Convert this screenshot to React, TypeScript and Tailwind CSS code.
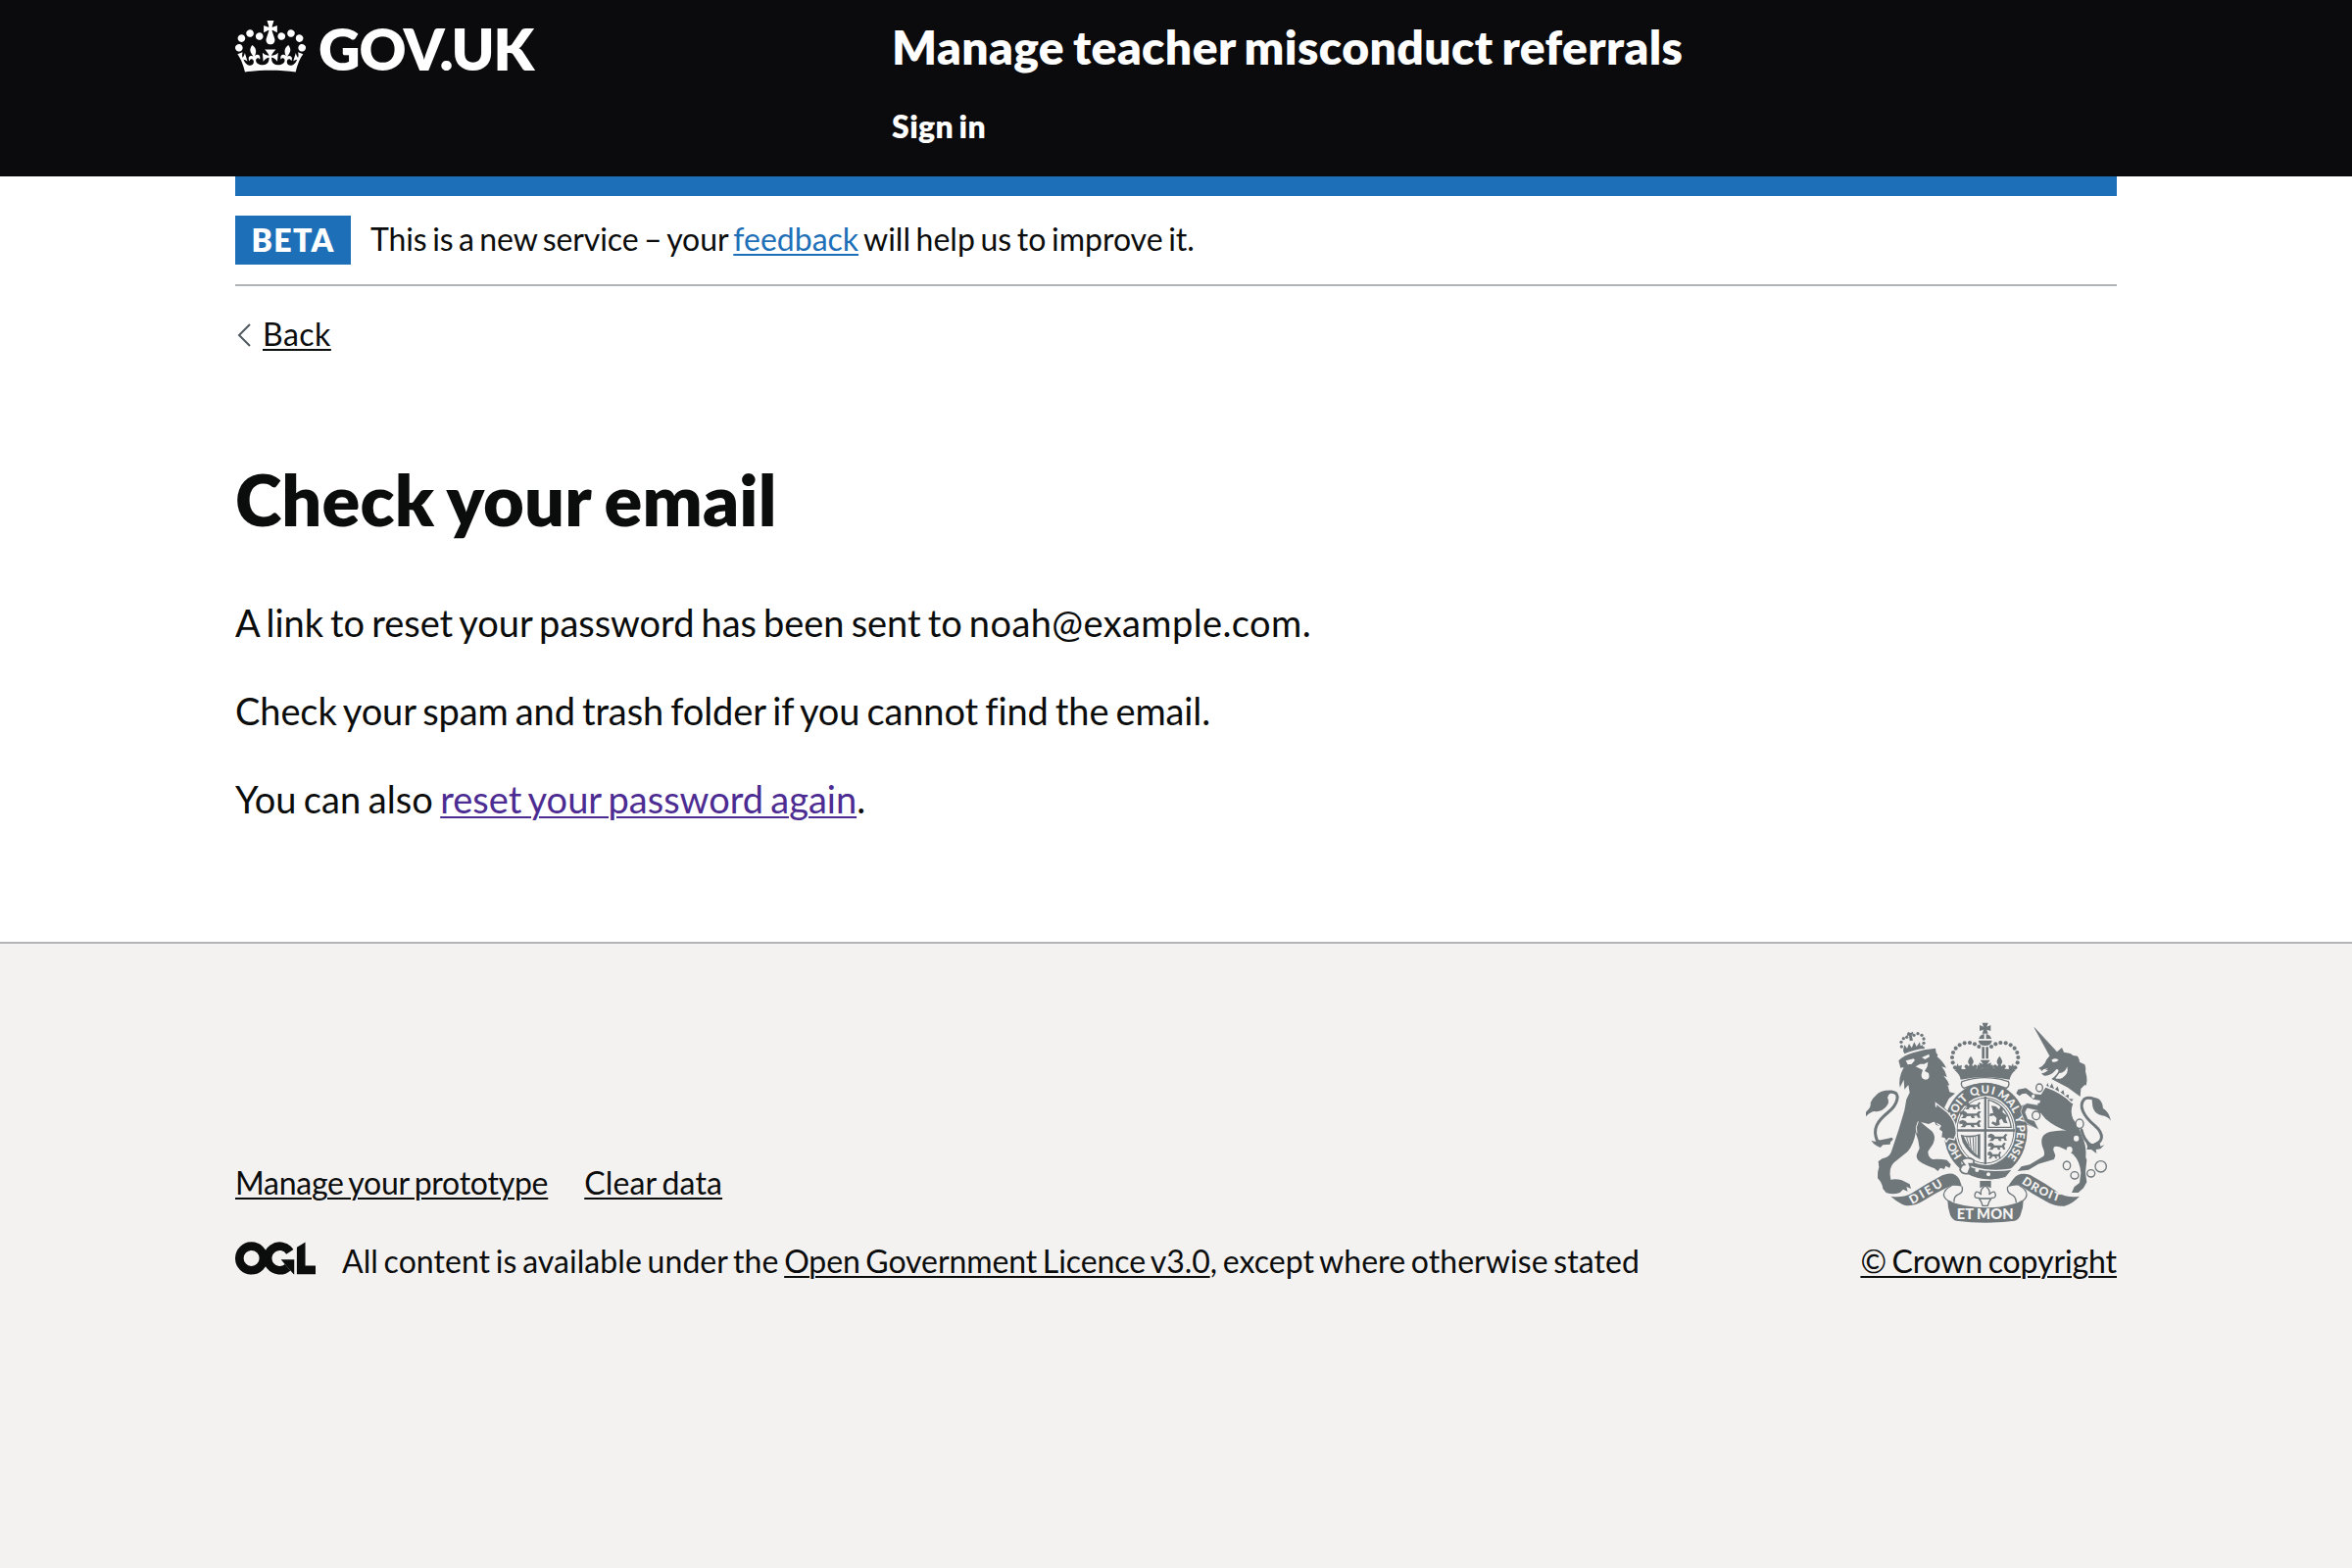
import React from "react";

const INK = "#6f777b";
const PAPER = "#f3f2f1";

function Crown() {
  return (
    <svg viewBox="0 0 132 97" className="block h-[53px] w-[72px] shrink-0" fill="currentColor" aria-hidden="true">
      <path d="M25 30.2c3.5 1.5 7.7-.2 9.1-3.7 1.5-3.6-.2-7.8-3.9-9.2-3.6-1.4-7.6.3-9.1 3.9-1.4 3.5.3 7.5 3.9 9zM9 39.5c3.6 1.5 7.8-.2 9.2-3.7 1.5-3.6-.2-7.8-3.9-9.1-3.6-1.5-7.6.2-9.1 3.8-1.4 3.5.3 7.5 3.8 9zM4.4 57.2c3.5 1.5 7.7-.2 9.1-3.8 1.5-3.6-.2-7.7-3.9-9.1-3.5-1.5-7.6.3-9.1 3.8-1.4 3.5.3 7.6 3.9 9.1zm38.3-21.4c3.5 1.5 7.7-.2 9.1-3.8 1.5-3.6-.2-7.7-3.9-9.1-3.6-1.5-7.6.3-9.1 3.8-1.3 3.6.4 7.7 3.9 9.1zm64.4-5.6c-3.6 1.5-7.8-.2-9.1-3.7-1.5-3.6.2-7.8 3.8-9.2 3.6-1.4 7.7.3 9.2 3.9 1.3 3.5-.4 7.5-3.9 9zm15.9 9.3c-3.6 1.5-7.7-.2-9.1-3.7-1.5-3.6.2-7.8 3.7-9.1 3.6-1.5 7.7.2 9.2 3.8 1.5 3.5-.3 7.5-3.8 9zm4.7 17.7c-3.6 1.5-7.8-.2-9.2-3.8-1.5-3.6.2-7.7 3.9-9.1 3.6-1.5 7.7.3 9.2 3.8 1.3 3.5-.4 7.6-3.9 9.1zM89.3 35.8c-3.6 1.5-7.8-.2-9.2-3.8-1.4-3.6.2-7.7 3.9-9.1 3.6-1.5 7.7.3 9.2 3.8 1.4 3.6-.3 7.7-3.9 9.1zM69.7 17.7l8.9 4.7V9.3l-8.9 2.8c-.2-.3-.5-.6-.9-.9L72.4 0H59.6l3.5 11.2c-.3.3-.6.5-.9.9l-8.8-2.8v13.1l8.8-4.7c.3.3.6.7.9.9l-5 15.4v.1c-.2.8-.4 1.6-.4 2.4 0 4.1 3.1 7.5 7 8.1h.2c.3 0 .7.1 1 .1.4 0 .7 0 1-.1h.2c4-.6 7.1-4.1 7.1-8.1 0-.8-.1-1.7-.4-2.4V34l-5.1-15.4c.4-.2.7-.6 1-.9zM66 92.8c16.9 0 32.8 1.1 47.1 3.2 4-16.9 8.9-26.7 14-33.5l-9.6-3.4c1 4.9 1.1 7.2 0 10.2-1.5-1.4-3-4.3-4.2-8.7L108.6 76c2.8-2 5-3.2 7.5-3.3-4.4 9.4-10 11.9-13.6 11.2-4.3-.8-6.3-4.6-5.6-7.9 1-4.7 5.7-5.9 8-.5 4.3-8.7-3-11.4-7.6-8.8 7.1-7.2 7.9-13.5 2.1-21.1-8 6.1-8.1 12.3-4.5 20.8-4.7-5.4-12.1-2.5-9.5 6.2 3.4-5.2 7.9-2 7.2 3.1-.6 4.3-6.4 7.8-13.5 7.2-10.3-.9-10.9-8-11.2-13.8 2.5-.5 7.1 1.8 11 7.3L80.2 60c-4.1 4.4-8 5.3-12.3 5.4 1.4-4.4 8-11.6 8-11.6H55.5s6.4 7.2 7.9 11.6c-4.2-.1-8-1-12.3-5.4l1.4 16.4c3.9-5.5 8.5-7.7 10.9-7.3-.3 5.8-.9 12.8-11.1 13.8-7.2.6-12.9-2.9-13.5-7.2-.7-5 3.8-8.3 7.1-3.1 2.7-8.7-4.6-11.6-9.4-6.2 3.7-8.5 3.6-14.7-4.6-20.8-5.8 7.6-5 13.9 2.2 21.1-4.7-2.6-11.9.1-7.7 8.8 2.3-5.5 7.1-4.2 8.1.5.7 3.3-1.3 7.1-5.7 7.9-3.5.7-9-1.8-13.5-11.2 2.5.1 4.7 1.3 7.5 3.3l-4.7-15.4c-1.2 4.4-2.7 7.2-4.3 8.7-1.1-3-.9-5.3 0-10.2l-9.5 3.4c5 6.9 9.9 16.7 14 33.5 14.8-2.1 30.8-3.2 47.7-3.2z" />
    </svg>
  );
}

function OglLogo() {
  return (
    <svg viewBox="0 0 483.2 196" className="block h-[34px] w-[82px] shrink-0" role="img" aria-label="Open Government Licence">
      <g fill="none" stroke="#0b0c0c" strokeWidth="50.7">
        <circle cx="97.8" cy="97.8" r="72.5" />
        <path d="M329 59A72.5 72.5 0 1 0 316 152" />
      </g>
      <path d="M274.900 105.700h80v87.800h-3l-53-60.300zM370.800 32.400 421.500.1v142.700h61.700v50.700H370.800z" fill="#0b0c0c" />
    </svg>
  );
}

/* Dots of the left-hand arch of the royal crown; mirrored for the right. */
const archDots = [
  [345, 209], [338, 194], [336, 178], [339, 163], [347, 150], [359, 140], [374, 134], [390, 133], [405, 137], [418, 145],
];

function Arch() {
  return (
    <g>
      {archDots.map(([x, y]) => (
        <circle key={`${x}-${y}`} cx={x} cy={y} r="6.200" />
      ))}
      <path d="M393 174q14 16 4 26 2 4 2 6 8-12 14 0-4 10-12 12h-16q-8-2-12-12 6-12 14 0 0-2 2-6-10-10 4-26z" />
      <path d="M352 196l4 8 10-2-2 10 8 8h-26zM414 200l8 4v14h-12z" />
    </g>
  );
}

function LionPassant() {
  return (
    <path d="M0 4l8-4 7 4 3 5h22l6-8 6 2-5 7 3 12h-6l-3-7-7 1 2 7h-7l-3-7-9 1-4 6H2l6-6-1-5-7 1z" />
  );
}

const mottoWords = [
  { word: "HO", at: 4, length: 50 },
  { word: "SOIT", at: 120, length: 78 },
  { word: "QUI", at: 210, length: 70 },
  { word: "MAL", at: 290, length: 76 },
  { word: "Y", at: 376, length: 20 },
  { word: "PENSE", at: 402, length: 106 },
];

function CoatOfArms() {
  return (
    <svg viewBox="72 70 750 615" className="block h-[205px] w-[250px]" fill={INK} aria-hidden="true">
      {/* Tails */}
      <g fill="none" stroke={INK} strokeWidth="9" strokeLinecap="round">
        <path d="M150 428Q126 450 106 432C92 396 106 374 140 346C168 324 182 284 150 284" />
        <path d="M732 400Q738 430 762 448C802 440 802 412 772 386C738 358 722 326 740 306Q750 298 772 306" />
      </g>
      <path d="M154 279q-38-2-50 14-14 12-18 24 4 12-14 28l0 14q12-14 26-16 20 4 36-14 12-14 4-28 4-12 16-18z" />
      <path d="M88 432q14 6 22 0l40-8-4 20-22 2-8 8-12-6q-10-6-16-16z" />
      <path d="M764 300q32 0 34 34 18 10 24 38-10-14-28-16-24-6-28-28-2-14-2-28z" />
      <path d="M742 428q8 16 28 14l16-10 4 18 12-4-12 12-14 2 2 12-16-12-14 0 2-10z" />

      {/* Lion */}
      <path d="M172 188Q188 172 216 164 250 152 285 150L287 164 292 170 290 176Q306 188 318 210L304 206Q316 220 320 238L310 234Q324 250 328 264L322 262 328 284 345 288 326 304 312 332 330 350Q346 372 345 410L340 428 326 424 318 434 314 424 304 422 306 406 296 398 302 390 286 384 282 374 264 382 240 376Q256 390 274 404 288 420 278 442L262 466Q262 484 276 490 300 488 320 492L332 506 328 516 316 510 312 520 300 516 292 526 282 518Q252 508 236 496 224 486 228 474L236 456Q234 430 224 408 220 440 200 466L158 500Q140 516 148 552 164 548 182 554L206 566 210 580 196 574 200 588 186 582 176 592Q154 600 134 592L124 580Q122 562 108 548 106 530 112 514L110 496 122 488Q144 484 150 466L172 400 190 340 196 306 206 286 202 262 190 276 188 246 176 270Q170 242 188 208L178 210Z" />
      <path d="M228 410q-6-18 4-36" fill="none" stroke={PAPER} strokeWidth="3" />
      <g fill={PAPER}>
        <path d="M194 188l24-6 4 4-10 12-12 2zM243 178l22-10 2 8-14 8zM224 206l14-8h12l12-6-2 14-8 14 12 6q6 20-10 20-14-2-12-16l4-14z" />
      </g>
      <path d="M186 158q30-14 64-14l2 7q-32 2-62 16z" />
      <g>
        {[[181, 145], [180, 131], [187, 120], [197, 116], [219, 110], [231, 105], [243, 110], [249, 121], [249, 134]].map(([x, y]) => (
          <circle key={`${x}-${y}`} cx={x} cy={y} r="5" />
        ))}
        <path d="M201 100l8 3 7-4 1 8-5 2 4 17-10 1-2-16-7 1 1-6z" />
        <path d="M186 154l4-14 8 10 6-14 8 13 8-18 7 14 10-14 2 12 8-4-3 8q-28 0-56 14z" />
      </g>

      {/* Unicorn */}
      <path d="M588 87l72 78-24 10z" stroke={INK} strokeWidth="2" />
      <path d="M600 211q12-4 20-16 8-22 30-28l22-19 6 14 20 4 8 6 14 2q6 10 6 18l16 8q4 10 2 20l4 18q2 12-2 26l-4-2-12 12-2 24-38-28-50-26q20-14 22-26-6-8-10 0-16 18-34 16l-8-6 6-8 14-8-14 2-6 6-4-6z" />
      <path d="M640 186q12-8 22 0-8 8-18 6zM664 226q18 0 24-20 6 22-14 34-12 6-22 2zM604 224l18-8 8 2-14 8z" fill={PAPER} />
      <path d="M622 270Q666 284 706 320 696 342 706 366 726 392 732 416 748 446 745 484L748 492 744 530 748 560 738 578 722 592H702L710 574 726 562 730 532Q728 496 706 474 680 458 664 452 644 446 646 462L652 478 648 490 600 504 570 522 536 526 548 512 574 506 616 480Q622 472 612 450 602 416 634 406 662 400 686 402 650 390 622 366L600 340 566 332 558 346 566 366 586 372 600 398 586 392 566 384 552 370 542 344 548 326 566 318 602 324 606 310 584 306 562 288 550 290 542 296 532 288 538 276 562 272 586 290 608 292Z" />
      <path d="M620 262q46 12 90 58" fill="none" stroke={PAPER} strokeWidth="5" />
      <path d="M628 250l6 16 8-14 8 22 10-12 6 22 12-10 4 20 14-8-2 16 16 2-8 12q-32-34-80-50z" fill={INK} stroke={PAPER} strokeWidth="4" />
      <g fill="none" stroke={INK} strokeWidth="4">
        <ellipse cx="603" cy="271" rx="10" ry="12" fill={PAPER} />
        <ellipse cx="726" cy="381" rx="12" ry="14" fill={PAPER} />
        <ellipse cx="687" cy="509" rx="11" ry="13" />
        <ellipse cx="711" cy="539" rx="12" ry="11" />
        <ellipse cx="761" cy="533" rx="12" ry="11" />
        <circle cx="791" cy="512" r="17" />
      </g>
      <g fill={PAPER}>
        <ellipse cx="584" cy="297" rx="5" ry="6" />
        <ellipse cx="716" cy="426" rx="8" ry="9" />
        <ellipse cx="695" cy="461" rx="9" ry="10" />
      </g>

      {/* Royal crown */}
      <Arch />
      <g transform="matrix(-1 0 0 1 874 0)">
        <Arch />
      </g>
      <path d="M428 72h18l-4 12 12-5v18l-12-4 4 12h-18l4-12-12 4V79l12 5zM418 121q2-12 16-15v15zM440 106q14 3 16 15h-16z" />
      <path d="M416 126h42q-2 16-21 16t-21-16z" />
      <path d="M427 146h8v36h-8zM439 146h8v36h-8zM422 186h30l-9 13 12-5v18l-12-2 8 10h-28l8-10-12 2v-18l12 5z" />
      <path d="M343 216q94-10 188 0-16 12-19 30-75-16-150 0-2-16-19-30z" />
      <path d="M366 252q71-24 142 0 6 12-6 20-65-26-130 0-12-8-6-20z" fill={PAPER} stroke={INK} strokeWidth="4" />

      {/* Garter */}
      <ellipse cx="438" cy="402" rx="128" ry="147" />
      <ellipse cx="438" cy="402" rx="92" ry="106" fill={PAPER} />
      <ellipse cx="438" cy="402" rx="87" ry="100" fill="none" stroke={INK} strokeWidth="3" />
      <path d="M434 298h7v208h-7zM347 398h182v7H347z" />
      <path id="garter" d="M369 483A97 114 0 1 1 500 489" fill="none" />
      <g fill={PAPER} fontFamily="Lato, sans-serif" fontWeight="900" fontSize="34">
        {mottoWords.map(({ word, at, length }) => (
          <text key={word}>
            <textPath href="#garter" startOffset={at} textLength={length}>{word}</textPath>
          </text>
        ))}
      </g>
      <g transform="translate(374 314) scale(.95 1)"><LionPassant /></g>
      <g transform="translate(360 341) scale(1.250 1)"><LionPassant /></g>
      <g transform="translate(358 369) scale(1.300 1)"><LionPassant /></g>
      <g transform="translate(446 411) scale(1.150 1)"><LionPassant /></g>
      <g transform="translate(446 438) scale(1.050 1)"><LionPassant /></g>
      <g transform="translate(445 465) scale(.8 1)"><LionPassant /></g>
      <path d="M447 308q58 14 70 84h-70z" fill="none" stroke={INK} strokeWidth="4" />
      <path d="M456 326l14 2 10 10 4-10 8 6-2 12 14 10-4 10 6 14-12-2-6-12-8 4 2 14-12 4-14-8 4-6 10 4 2-14-8-8-14 2 2-8 10-2z" />
      <path d="M362 414q28 8 60-2v78q-36-16-54-52l-6-24z" />
      <path d="M372 420q22 6 42-2v60q-22-14-42-58z" fill={PAPER} />
      <path d="M380 422l8 26M390 422l4 38M400 422l2 46M408 420v54" stroke={INK} strokeWidth="3" />
      <path d="M366 500q60 34 156 20l-22 26q-66 20-126-14z" stroke={PAPER} strokeWidth="4" />
      <path d="M364 492q20-12 38 0v12h-14l4 10-8 20q-18 2-24-12 4-16 14-16z" fill={PAPER} stroke={INK} strokeWidth="5" />
      <circle cx="412" cy="523" r="6" fill={PAPER} />
      <circle cx="447" cy="536" r="6" fill={PAPER} />

      {/* Forelegs resting on the garter */}
      <path d="M286 318L322 346Q350 374 349 412L342 430 326 426 318 436 312 426 302 424 304 406 294 398 300 388 290 380Z" stroke={PAPER} strokeWidth="4" />
      <path d="M274 326L292 332 296 382 274 372Z" />
      <path d="M602 324L566 318 552 326 546 344 556 370 568 382 602 400 588 372 568 366 560 346 566 334 602 342Z" stroke={PAPER} strokeWidth="2" />
      <path d="M598 318h24v30h-24z" />
      <ellipse cx="593" cy="356" rx="12" ry="13" fill={PAPER} stroke={INK} strokeWidth="4" />

      {/* Ribbon */}
      <path d="M148 603q34 6 62-8 50-32 96-56 36-16 52 12l8 22q-18-4-34-2-40 18-84 46-28 18-56 14-22-8-44-28z" />
      <path d="M726 603q-34 6-60-8-44-32-92-58-34-10-50 12-12 14-18 26 22-8 40-4 36 26 78 48 26 16 56 14 26-8 46-30z" />
      <g fill="none" stroke={INK} strokeWidth="4">
        <path d="M334 571q-22 10-24 28 4 16 24 22M366 573q6 16-10 24-16 6-14 24" />
        <path d="M542 571q22 10 22 28-2 16-22 22M506 573q-4 16 10 24 16 6 16 26" />
      </g>
      <path d="M322 616q54 22 116 22t116-22q0 22-8 42-4 16-18 20-90 12-180 0-12-4-18-18-8-24-8-44z" />
      <g fill={PAPER} fontFamily="Lato, sans-serif" fontWeight="900">
        <path id="dieu" d="M213 628Q262 602 318 566" fill="none" />
        <path id="droit" d="M548 563Q602 602 680 625" fill="none" />
        <text fontSize="37"><textPath href="#dieu" textLength="112">DIEU</textPath></text>
        <text fontSize="36"><textPath href="#droit" textLength="128">DROIT</textPath></text>
        <text x="350" y="674" fontSize="44" textLength="174">ET MON</text>
      </g>
      <path d="M421 556h34v22l-18-8-16 8z" />
      <path d="M437 570q18 14 12 28 18-18 20 2-2 10-12 8l-8 12-4 12h-16l-4-12-8-12q-12 2-12-8 4-20 20-2-6-14 12-28z" fill={PAPER} stroke={INK} strokeWidth="4" />
      <path d="M420 610h34" stroke={INK} strokeWidth="5" />
    </svg>
  );
}

const link = "underline decoration-2 underline-offset-[3px]";

export default function App() {
  return (
    <div className="flex min-h-[1600px] flex-col bg-[#f3f2f1] font-[Lato,sans-serif] text-[32px] leading-[40px] [word-spacing:-0.08em] [font-variant-ligatures:none] text-[#0b0c0c]">
      <header className="h-[180px] bg-[#0b0b0d] text-white">
        <div className="mx-[240px] flex">
          <a className="flex w-[670px] pt-[21px]">
            <Crown />
            <span className="ml-[13px] text-[59px] leading-[57px] font-extrabold tracking-[-1.2px]">GOV.UK</span>
          </a>
          <div className="pt-[18px]">
            <div className="text-[48px] leading-[60px] font-extrabold tracking-[0.4px]">Manage teacher misconduct referrals</div>
            <div className="mt-[31px] font-extrabold tracking-[0.4px]">Sign in</div>
          </div>
        </div>
      </header>

      <div className="bg-white pb-[121px]">
        <div className="mx-[240px]">
          <div className="h-5 bg-[#1d70b8]" />
          <div className="flex items-start border-b-2 border-[#b1b4b6] py-5">
            <strong className="flex h-[50px] w-[118px] items-center justify-center bg-[#1d70b8] font-extrabold tracking-[1.3px] text-white">BETA</strong>
            <p className="ml-5 pt-[4px]">
              <span className="tracking-[-0.1px]">This is a new service – your </span>
              <a className={`${link} text-[#1d70b8]`}>feedback</a> will help us to improve it.
            </p>
          </div>
          <div className="mt-[29px] flex items-start">
            <svg viewBox="0 0 14 24" className="mt-[9px] ml-[2px] h-6 w-[14px]" fill="none" stroke="#505a5f" strokeWidth="2">
              <path d="M13 1 2 12l11 11" />
            </svg>
            <a className={`${link} ml-[12px] tracking-[0.5px]`}>Back</a>
          </div>

          <main className="pt-[108px] text-[38px] leading-[50px]">
            <h1 className="text-[72px] leading-[80px] font-extrabold tracking-[0.15px]">Check your email</h1>
            <p className="mt-[61px] tracking-[-0.04px]">
              A link to reset your password has been sent to <span className="tracking-[0.4px]">noah@example.com</span>.
            </p>
            <p className="mt-[40px] tracking-[-0.1px]">Check your spam and trash folder if you cannot find the email.</p>
            <p className="mt-[40px]">
              <span className="tracking-[0.1px]">You can also </span>
              <a className={`${link} text-[#4c2c92]`}>reset your password again</a>.
            </p>
          </main>
        </div>
      </div>

      <footer className="border-t-2 border-[#b1b4b6]">
        <div className="mx-[240px] flex items-end justify-between pt-[80px]">
          <div>
            <nav className="flex gap-[37px]">
              <a className={`${link} tracking-[-0.25px]`}>Manage your prototype</a>
              <a className={`${link} tracking-[0.15px]`}>Clear data</a>
            </nav>
            <div className="mt-[40px] flex items-start">
              <OglLogo />
              <p className="ml-[27px] tracking-[0.06px]">
                All content is available under the <a className={`${link} tracking-[-0.08px]`}>Open Government Licence v3.0</a>, except where otherwise stated
              </p>
            </div>
          </div>
          <div className="flex flex-col items-end">
            <div className="mr-[6px]">
              <CoatOfArms />
            </div>
            <a className={`${link} mt-[19px] tracking-[-0.1px]`}>© Crown copyright</a>
          </div>
        </div>
      </footer>
    </div>
  );
}
